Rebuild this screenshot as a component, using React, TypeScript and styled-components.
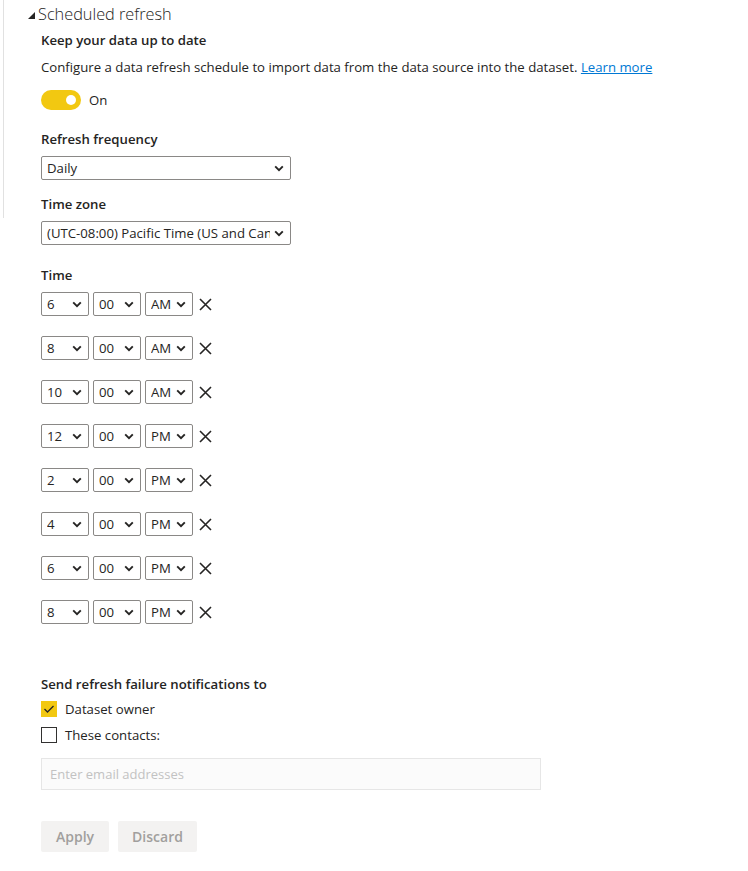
import React, { useState } from "react";
import styled, { createGlobalStyle } from "styled-components";

const GlobalStyle = createGlobalStyle`
  body {
    margin: 0;
    background: #ffffff;
    font-family: "Open Sans", "Noto Sans", sans-serif;
    color: #252423;
  }
`;

interface TimeRow {
  hour: string;
  minute: string;
  period: string;
}

const timeRows: TimeRow[] = [
  { hour: "6", minute: "00", period: "AM" },
  { hour: "8", minute: "00", period: "AM" },
  { hour: "10", minute: "00", period: "AM" },
  { hour: "12", minute: "00", period: "PM" },
  { hour: "2", minute: "00", period: "PM" },
  { hour: "4", minute: "00", period: "PM" },
  { hour: "6", minute: "00", period: "PM" },
  { hour: "8", minute: "00", period: "PM" },
];

const hours = ["1", "2", "3", "4", "5", "6", "7", "8", "9", "10", "11", "12"];
const minutes = ["00", "30"];
const periods = ["AM", "PM"];

const Chevron = () => (
  <ChevronIcon width="10" height="7" viewBox="0 0 10 7">
    <path d="M1.2 1.4 L5 5.2 L8.8 1.4" fill="none" stroke="#252423" strokeWidth="1.9" />
  </ChevronIcon>
);

const SelectBox = ({
  width,
  value,
  options,
}: {
  width: number;
  value: string;
  options: string[];
}) => {
  const [current, setCurrent] = useState(value);
  return (
    <SelectWrap $width={width}>
      <NativeSelect value={current} onChange={(e) => setCurrent(e.target.value)}>
        {options.map((o) => (
          <option key={o} value={o}>
            {o}
          </option>
        ))}
      </NativeSelect>
      <Chevron />
    </SelectWrap>
  );
};

const App = () => {
  const [owner, setOwner] = useState(true);
  const [contacts, setContacts] = useState(false);

  return (
    <Page>
      <GlobalStyle />
      <Rail />
      <Content>
        <SectionHeader>
          <svg width="7" height="7" viewBox="0 0 7 7">
            <polygon points="7,0 7,7 0,7" fill="#252423" />
          </svg>
          <span>Scheduled refresh</span>
        </SectionHeader>

        <Body>
          <Label $top={4}>Keep your data up to date</Label>
          <Description>
            Configure a data refresh schedule to import data from the data source into the dataset.{" "}
            <LearnMore href="#">Learn more</LearnMore>
          </Description>

          <ToggleRow>
            <Toggle>
              <Knob />
            </Toggle>
            <span>On</span>
          </ToggleRow>

          <Label $top={19}>Refresh frequency</Label>
          <Field>
            <SelectBox width={250} value="Daily" options={["Daily", "Weekly"]} />
          </Field>

          <Label $top={14}>Time zone</Label>
          <Field>
            <SelectBox
              width={250}
              value="(UTC-08:00) Pacific Time (US and Canada)"
              options={["(UTC-08:00) Pacific Time (US and Canada)", "(UTC) Coordinated Universal Time"]}
            />
          </Field>

          <Label $top={20}>Time</Label>
          <TimeList>
            {timeRows.map((row, i) => (
              <TimeRowLine key={i}>
                <SelectBox width={48} value={row.hour} options={hours} />
                <SelectBox width={48} value={row.minute} options={minutes} />
                <SelectBox width={48} value={row.period} options={periods} />
                <RemoveButton aria-label="Remove">
                  <svg width="13" height="13" viewBox="0 0 13 13">
                    <path d="M1 1 L12 12 M12 1 L1 12" stroke="#252423" strokeWidth="1.6" fill="none" />
                  </svg>
                </RemoveButton>
              </TimeRowLine>
            ))}
          </TimeList>

          <Label $top={50}>Send refresh failure notifications to</Label>
          <CheckRow $top={7} onClick={() => setOwner(!owner)}>
            <CheckBox $checked={owner}>
              {owner && (
                <svg width="12" height="10" viewBox="0 0 12 10">
                  <path d="M1.5 5 L4.5 8 L10.5 2" stroke="#252423" strokeWidth="1.3" fill="none" />
                </svg>
              )}
            </CheckBox>
            <span>Dataset owner</span>
          </CheckRow>
          <CheckRow $top={10} onClick={() => setContacts(!contacts)}>
            <CheckBox $checked={contacts} />
            <span>These contacts:</span>
          </CheckRow>

          <EmailInput placeholder="Enter email addresses" />

          <ButtonRow>
            <ActionButton $width={68}>Apply</ActionButton>
            <ActionButton $width={79}>Discard</ActionButton>
          </ButtonRow>
        </Body>
      </Content>
    </Page>
  );
};

export default App;

const Page = styled.div`
  display: flex;
  align-items: flex-start;
  width: 748px;
  min-height: 871px;
`;

const Rail = styled.div`
  width: 3px;
  height: 218px;
  border-right: 1px solid #e1e1e1;
  flex-shrink: 0;
`;

const Content = styled.div`
  display: flex;
  flex-direction: column;
  padding-left: 24px;
  padding-top: 2px;
`;

const SectionHeader = styled.div`
  display: flex;
  align-items: center;
  gap: 3px;
  height: 24px;
  font-size: 16.3px;
  font-weight: 300;
  color: #252423;

  svg {
    margin-top: 2px;
  }
`;

const Body = styled.div`
  display: flex;
  flex-direction: column;
  align-items: flex-start;
  padding-left: 13px;
`;

const Label = styled.div<{ $top: number }>`
  margin-top: ${(p) => p.$top}px;
  height: 20px;
  line-height: 20px;
  font-size: 13.2px;
  font-weight: 600;
  color: #252423;
`;

const Description = styled.div`
  margin-top: 7px;
  height: 20px;
  line-height: 20px;
  font-size: 13.2px;
  color: #252423;
  white-space: nowrap;
`;

const LearnMore = styled.a`
  color: #0078d4;
  text-decoration: underline;
`;

const ToggleRow = styled.div`
  display: flex;
  align-items: center;
  gap: 8px;
  margin-top: 12px;
  height: 21px;
  font-size: 13.2px;
  color: #252423;
`;

const Toggle = styled.div`
  position: relative;
  width: 40px;
  height: 20px;
  border-radius: 10px;
  background: #f2c811;
`;

const Knob = styled.div`
  position: absolute;
  top: 5px;
  right: 5px;
  width: 10px;
  height: 10px;
  border-radius: 50%;
  background: #ffffff;
`;

const Field = styled.div`
  margin-top: 7px;
  display: flex;
`;

const SelectWrap = styled.div<{ $width: number }>`
  position: relative;
  width: ${(p) => p.$width}px;
  height: 24px;
`;

const NativeSelect = styled.select`
  appearance: none;
  -webkit-appearance: none;
  box-sizing: border-box;
  width: 100%;
  height: 100%;
  margin: 0;
  padding: 0 20px 0 5px;
  border: 1px solid #8a8886;
  border-radius: 2px;
  background: #ffffff;
  font-family: "Open Sans", "Noto Sans", sans-serif;
  font-size: 13.2px;
  color: #252423;
  outline: none;
`;

const ChevronIcon = styled.svg`
  position: absolute;
  right: 7px;
  top: 9px;
  pointer-events: none;
`;

const TimeList = styled.div`
  display: flex;
  flex-direction: column;
  gap: 20px;
  margin-top: 7px;
`;

const TimeRowLine = styled.div`
  display: flex;
  align-items: center;
  gap: 4px;
`;

const RemoveButton = styled.button`
  display: flex;
  align-items: center;
  justify-content: center;
  width: 13px;
  height: 20px;
  padding: 0;
  margin-left: 2px;
  border: none;
  background: none;
`;

const CheckRow = styled.label<{ $top: number }>`
  display: flex;
  align-items: center;
  gap: 8px;
  margin-top: ${(p) => p.$top}px;
  height: 16px;
  font-size: 13.2px;
  color: #252423;
  cursor: pointer;
`;

const CheckBox = styled.span<{ $checked: boolean }>`
  box-sizing: border-box;
  display: flex;
  align-items: center;
  justify-content: center;
  width: 16px;
  height: 16px;
  border: 1px solid ${(p) => (p.$checked ? "#f2c811" : "#323130")};
  background: ${(p) => (p.$checked ? "#f2c811" : "#ffffff")};
`;

const EmailInput = styled.input`
  box-sizing: border-box;
  margin-top: 15px;
  width: 500px;
  height: 32px;
  padding: 0 8px;
  border: 1px solid #e6e6e6;
  background: #fbfbfb;
  font-family: "Open Sans", "Noto Sans", sans-serif;
  font-size: 13px;
  color: #252423;
  outline: none;

  &::placeholder {
    color: #c2c2c2;
  }
`;

const ButtonRow = styled.div`
  display: flex;
  gap: 9px;
  margin-top: 31px;
`;

const ActionButton = styled.button<{ $width: number }>`
  width: ${(p) => p.$width}px;
  height: 31px;
  border: none;
  border-radius: 2px;
  background: #f3f2f1;
  color: #a19f9d;
  font-family: "Open Sans", "Noto Sans", sans-serif;
  font-size: 14px;
  font-weight: 600;
`;
